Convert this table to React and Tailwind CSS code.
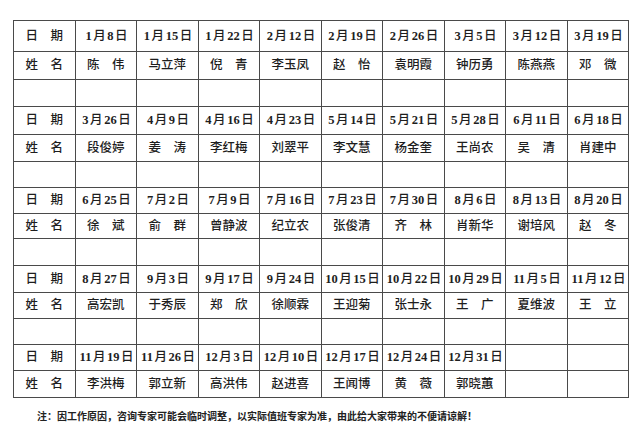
import React from "react";

const groups = [
  {
    dates: ["1月8日", "1月15日", "1月22日", "2月12日", "2月19日", "2月26日", "3月5日", "3月12日", "3月19日"],
    names: ["陈　伟", "马立萍", "倪　青", "李玉凤", "赵　怡", "袁明霞", "钟历勇", "陈燕燕", "邓　微"],
    h: [31, 28, 27],
  },
  {
    dates: ["3月26日", "4月9日", "4月16日", "4月23日", "5月14日", "5月21日", "5月28日", "6月11日", "6月18日"],
    names: ["段俊婷", "姜　涛", "李红梅", "刘翠平", "李文慧", "杨金奎", "王尚农", "吴　清", "肖建中"],
    h: [28, 27, 26],
  },
  {
    dates: ["6月25日", "7月2日", "7月9日", "7月16日", "7月23日", "7月30日", "8月6日", "8月13日", "8月20日"],
    names: ["徐　斌", "俞　群", "曾静波", "纪立农", "张俊清", "齐　林", "肖新华", "谢培风", "赵　冬"],
    h: [26, 25, 27],
  },
  {
    dates: ["8月27日", "9月3日", "9月17日", "9月24日", "10月15日", "10月22日", "10月29日", "11月5日", "11月12日"],
    names: ["高宏凯", "于秀辰", "郑　欣", "徐顺霖", "王迎菊", "张士永", "王　广", "夏维波", "王　立"],
    h: [27, 26, 26],
  },
  {
    dates: ["11月19日", "11月26日", "12月3日", "12月10日", "12月17日", "12月24日", "12月31日", "", ""],
    names: ["李洪梅", "郭立新", "高洪伟", "赵进喜", "王闻博", "黄　薇", "郭晓蕙", "", ""],
    h: [26, 27],
  },
];

const font = {
  fontFamily: '"Liberation Serif", "Noto Sans CJK SC", serif',
};

function DateText({ t }) {
  const parts = t.split(/(\d+)/).filter(Boolean);
  return (
    <span>
      {parts.map((p, i) =>
        /\d/.test(p) ? (
          <span key={i} className="font-bold px-[1.5px]">{p}</span>
        ) : (
          <span key={i} className="font-medium">{p}</span>
        )
      )}
    </span>
  );
}

export default function App() {
  const rows = [];
  groups.forEach((g, gi) => {
    rows.push(
      <tr key={`d${gi}`} style={{ height: g.h[0] }}>
        <td className="border border-[#4a4a4a] text-center font-medium">日　期</td>
        {g.dates.map((d, i) => (
          <td key={i} className="border border-[#4a4a4a] text-center whitespace-nowrap">
            <DateText t={d} />
          </td>
        ))}
      </tr>
    );
    rows.push(
      <tr key={`n${gi}`} style={{ height: g.h[1] }}>
        <td className="border border-[#4a4a4a] text-center font-medium">姓　名</td>
        {g.names.map((n, i) => (
          <td key={i} className="border border-[#4a4a4a] text-center font-medium whitespace-nowrap">
            {n}
          </td>
        ))}
      </tr>
    );
    if (g.h[2]) {
      rows.push(
        <tr key={`s${gi}`} style={{ height: g.h[2] }}>
          {Array.from({ length: 10 }).map((_, i) => (
            <td key={i} className="border border-[#4a4a4a]"></td>
          ))}
        </tr>
      );
    }
  });

  return (
    <div className="w-[640px] h-[434px] bg-white overflow-hidden relative text-[#1e1e1e]" style={font}>
      <div className="pt-[20px] pl-[13px]">
        <table className="border-collapse table-fixed w-[615px] text-[12.5px] leading-none">
          <colgroup>
            {Array.from({ length: 10 }).map((_, i) => (
              <col key={i} className="w-[61.5px]" />
            ))}
          </colgroup>
          <tbody>{rows}</tbody>
        </table>
        <div className="mt-[14px] pl-[24px] text-[10px] leading-none font-bold text-[#222] whitespace-nowrap">
          注：因工作原因，咨询专家可能会临时调整，以实际值班专家为准，由此给大家带来的不便请谅解！
        </div>
      </div>
    </div>
  );
}
